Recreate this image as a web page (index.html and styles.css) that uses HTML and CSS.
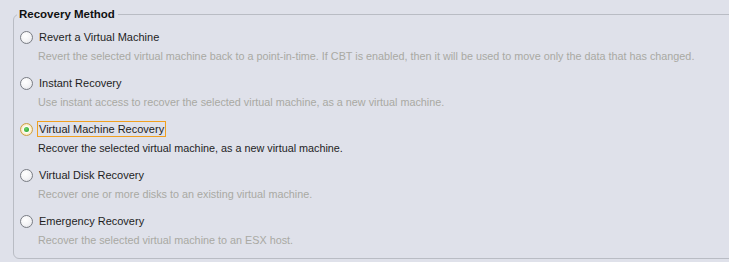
FILE: index.html
```html
<!DOCTYPE html>
<html>
<head>
<meta charset="utf-8">
<link rel="stylesheet" href="styles.css">
</head>
<body>
<fieldset class="group">
  <legend class="legend">Recovery Method</legend>
  <div class="option">
    <div class="row"><span class="radio"></span><span class="label">Revert a Virtual Machine</span></div>
    <div class="desc">Revert the selected virtual machine back to a point-in-time. If CBT is enabled, then it will be used to move only the data that has changed.</div>
  </div>
  <div class="option">
    <div class="row"><span class="radio"></span><span class="label">Instant Recovery</span></div>
    <div class="desc">Use instant access to recover the selected virtual machine, as a new virtual machine.</div>
  </div>
  <div class="option selected">
    <div class="row"><span class="radio checked"><span class="dot"></span></span><span class="label focus">Virtual Machine Recovery</span></div>
    <div class="desc">Recover the selected virtual machine, as a new virtual machine.</div>
  </div>
  <div class="option">
    <div class="row"><span class="radio"></span><span class="label">Virtual Disk Recovery</span></div>
    <div class="desc">Recover one or more disks to an existing virtual machine.</div>
  </div>
  <div class="option">
    <div class="row"><span class="radio"></span><span class="label">Emergency Recovery</span></div>
    <div class="desc">Recover the selected virtual machine to an ESX host.</div>
  </div>
</fieldset>
</body>
</html>
```
FILE: styles.css
```css
html, body {
  margin: 0;
  padding: 0;
  background: #dfe1ea;
  width: 729px;
  height: 262px;
  overflow: hidden;
}
body {
  font-family: "Liberation Sans", Arial, sans-serif;
  font-size: 11px;
  color: #1e1e1e;
}
.group {
  margin: 8px -20px 0 13px;
  padding: 8px 0 4px 6px;
  border: 1px solid #b9bcc4;
  border-radius: 6px;
  height: 251px;
  box-sizing: border-box;
}
.legend {
  padding: 0 3px 0 2px;
  margin-left: -3px;
  font-weight: bold;
  font-size: 11.5px;
  color: #101010;
}
.option {
  height: 46px;
  display: flex;
  flex-direction: column;
}
.row {
  display: flex;
  align-items: center;
  height: 18px;
}
.radio {
  width: 13px;
  height: 13px;
  border-radius: 50%;
  border: 1px solid #7a7d84;
  background: radial-gradient(circle at 40% 35%, #ffffff 0%, #f4f4f6 50%, #dadce2 100%);
  box-sizing: border-box;
  margin-right: 4px;
  display: flex;
  align-items: center;
  justify-content: center;
}
.radio.checked {
  border-color: #c9a04a;
  background: radial-gradient(circle, #ffffff 35%, #f6d37a 100%);
}
.dot {
  width: 5px;
  height: 5px;
  border-radius: 50%;
  background: radial-gradient(circle at 40% 35%, #6fd36a 0%, #1a9a20 100%);
}
.label {
  padding: 1px 1px;
  border: 1px solid transparent;
}
.label.focus {
  border-color: #f0a020;
}
.desc {
  margin-left: 18px;
  margin-top: 4px;
  font-size: 10.8px;
  color: #a9a9a3;
  white-space: nowrap;
}
.selected .desc {
  color: #1e1e1e;
}
```
